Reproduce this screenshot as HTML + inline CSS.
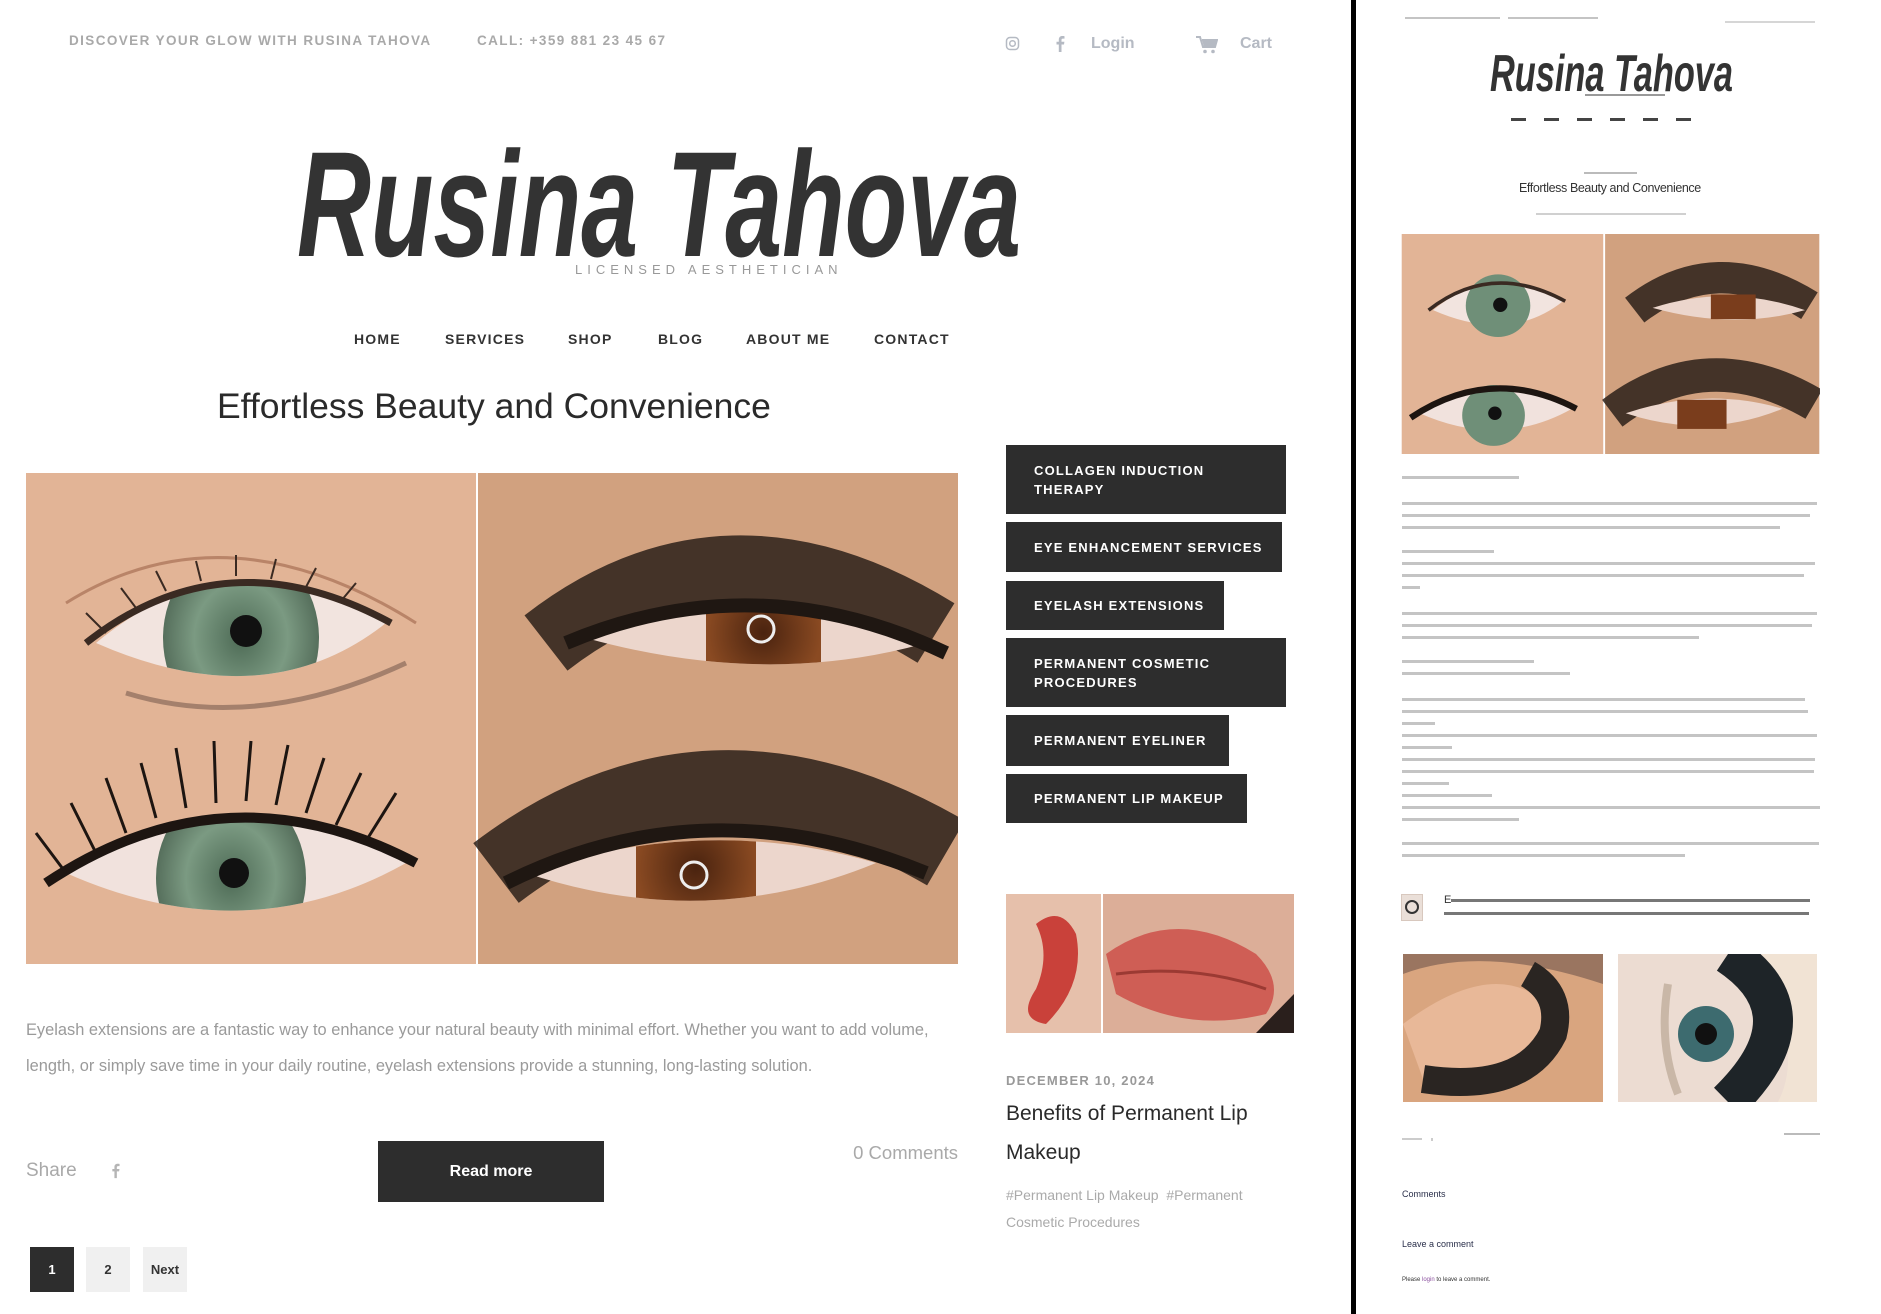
<!DOCTYPE html>
<html><head><meta charset="utf-8">
<style>
*{margin:0;padding:0;box-sizing:border-box}
html,body{width:1881px;height:1314px;overflow:hidden;background:#fff;font-family:"Liberation Sans",Arial,sans-serif;position:relative}
.a{position:absolute;white-space:nowrap}
.top{font-size:13.5px;font-weight:bold;color:#a9a9a9;letter-spacing:1.4px;top:33px}
.nav{top:331px;font-size:14px;font-weight:bold;color:#333;letter-spacing:1.2px}
.btn{position:absolute;left:1006px;background:#2d2d2d;color:#fff;font-size:13px;font-weight:bold;letter-spacing:1.2px;padding-left:28px;display:flex;align-items:center;line-height:19px;white-space:normal}
.ln{position:absolute;left:1402px;height:3px;background:#c4c4c4}
.pg{position:absolute;top:1247px;width:44px;height:45px;background:#f0f0f0;font-size:13px;font-weight:bold;color:#333;display:flex;align-items:center;justify-content:center}
</style></head><body>

<div class="a top" style="left:69px">DISCOVER YOUR GLOW WITH RUSINA TAHOVA</div>
<div class="a top" style="left:477px">CALL: +359 881 23 45 67</div>
<svg class="a" style="left:1005px;top:36px" width="15" height="15" viewBox="0 0 15 15"><rect x="1.5" y="1.5" width="12" height="12" rx="3.5" fill="none" stroke="#b5bac3" stroke-width="1.5"/><circle cx="7.5" cy="7.5" r="2.8" fill="none" stroke="#b5bac3" stroke-width="1.5"/></svg>
<svg class="a" style="left:1055px;top:35px" width="10" height="17" viewBox="0 0 10 17"><path d="M6.5 17V9.5H9L9.4 6.8H6.5V5c0-.8.3-1.4 1.4-1.4H9.5V1.2C9.2 1.1 8.3 1 7.3 1 5.2 1 3.8 2.3 3.8 4.6v2.2H1.5v2.7h2.3V17z" fill="#b5bac3"/></svg>
<div class="a" style="left:1091px;top:35px;font-size:16px;font-weight:bold;color:#b5bac3">Login</div>
<svg class="a" style="left:1196px;top:36px" width="22" height="18" viewBox="0 0 22 18"><path d="M0 1h4l3 10h12l2-7H6" fill="none" stroke="#b5bac3" stroke-width="2"/><path d="M6 4h15l-2 7H8z" fill="#b5bac3"/><circle cx="9" cy="15.5" r="1.8" fill="#b5bac3"/><circle cx="17" cy="15.5" r="1.8" fill="#b5bac3"/></svg>
<div class="a" style="left:1240px;top:35px;font-size:16px;font-weight:bold;color:#b5bac3">Cart</div>

<svg class="a" style="left:297px;top:118px" width="730" height="165" viewBox="0 0 730 165">
<text x="0" y="138" font-family="Liberation Sans Narrow, Liberation Sans, sans-serif" font-style="italic" font-weight="bold" font-size="150" fill="#333" textLength="724" lengthAdjust="spacingAndGlyphs">Rusina Tahova</text>
<rect x="270" y="140" width="250" height="20" fill="#fff"/>
<text x="278" y="156" font-family="Liberation Sans, sans-serif" font-size="13" fill="#999" letter-spacing="5">LICENSED AESTHETICIAN</text>
</svg>

<div class="a nav" style="left:354px">HOME</div>
<div class="a nav" style="left:445px">SERVICES</div>
<div class="a nav" style="left:568px">SHOP</div>
<div class="a nav" style="left:658px">BLOG</div>
<div class="a nav" style="left:746px">ABOUT ME</div>
<div class="a nav" style="left:874px">CONTACT</div>

<div class="a" style="left:217px;top:386px;font-size:35.5px;color:#2a2a2a">Effortless Beauty and Convenience</div>

<svg class="a" style="left:26px;top:473px" width="932" height="491" viewBox="0 0 932 491">
<defs>
<radialGradient id="gi" cx=".5" cy=".5" r=".5"><stop offset="0" stop-color="#4d6a55"/><stop offset=".6" stop-color="#7b9a82"/><stop offset="1" stop-color="#566f5c"/></radialGradient>
<radialGradient id="bi" cx=".5" cy=".5" r=".5"><stop offset="0" stop-color="#4a230f"/><stop offset="1" stop-color="#8a4a22"/></radialGradient>
<clipPath id="e1"><path d="M70 170 Q200 60 360 150 Q240 245 70 170z"/></clipPath>
<clipPath id="e2"><path d="M40 400 Q200 300 380 390 Q220 480 40 400z"/></clipPath>
<clipPath id="e3"><path d="M560 165 Q730 110 900 170 Q740 215 560 165z"/></clipPath>
<clipPath id="e4"><path d="M500 400 Q680 340 850 390 Q680 460 500 400z"/></clipPath>
</defs>
<rect width="450" height="491" fill="#e2b496"/>
<rect x="452" width="480" height="491" fill="#d1a17f"/>
<rect x="450" width="2" height="491" fill="#fff"/>
<path d="M40 130 Q200 30 390 150" fill="none" stroke="#b98468" stroke-width="3"/>
<path d="M70 170 Q200 60 360 150 Q240 245 70 170z" fill="#f2e4df"/>
<g clip-path="url(#e1)"><ellipse cx="215" cy="165" rx="78" ry="92" fill="url(#gi)"/><circle cx="220" cy="158" r="16" fill="#111"/></g>
<path d="M60 170 Q200 60 365 150" fill="none" stroke="#3a2a22" stroke-width="7"/>
<g stroke="#3a2a22" stroke-width="2" fill="none"><path d="M80 160 L60 140M110 135 L95 115M140 118 L130 98M175 108 L170 88M210 103 L210 82M245 106 L250 86M280 114 L290 95M315 128 L330 110"/></g>
<path d="M100 220 Q230 260 380 190" fill="none" stroke="#8a6a5a" stroke-width="5" opacity=".7"/>
<path d="M40 400 Q200 300 380 390 Q220 480 40 400z" fill="#f1e2dd"/>
<g clip-path="url(#e2)"><ellipse cx="205" cy="405" rx="75" ry="90" fill="url(#gi)"/><circle cx="208" cy="400" r="15" fill="#111"/></g>
<path d="M20 410 Q200 290 390 390" fill="none" stroke="#1d1511" stroke-width="10"/>
<g stroke="#1d1511" stroke-width="3" fill="none">
<path d="M40 400 L10 360M70 380 L45 330M100 360 L80 305M130 345 L115 290M160 335 L150 275M190 330 L188 268M220 328 L225 268M250 332 L262 272M280 340 L298 285M310 352 L335 300M340 368 L370 320"/></g>
<path d="M520 170 Q700 30 910 160" fill="none" stroke="#2b2019" stroke-width="70" opacity=".85"/>
<path d="M560 165 Q730 110 900 170 Q740 215 560 165z" fill="#ecd6cc"/>
<g clip-path="url(#e3)"><rect x="680" y="100" width="115" height="120" fill="url(#bi)"/><circle cx="735" cy="156" r="13" fill="none" stroke="#eee" stroke-width="3"/></g>
<path d="M540 170 Q730 90 920 180" fill="none" stroke="#1f1712" stroke-width="14"/>
<path d="M470 400 Q680 240 920 380" fill="none" stroke="#2b2019" stroke-width="75" opacity=".85"/>
<path d="M500 400 Q680 340 850 390 Q680 460 500 400z" fill="#ecd6cc"/>
<g clip-path="url(#e4)"><rect x="610" y="330" width="120" height="130" fill="url(#bi)"/><circle cx="668" cy="402" r="13" fill="none" stroke="#eee" stroke-width="3"/></g>
<path d="M480 410 Q680 310 900 400" fill="none" stroke="#1f1712" stroke-width="14"/>
</svg>

<div class="btn" style="top:445px;width:280px;height:69px">COLLAGEN INDUCTION<br>THERAPY</div>
<div class="btn" style="top:522px;width:276px;height:50px">EYE ENHANCEMENT SERVICES</div>
<div class="btn" style="top:581px;width:218px;height:49px">EYELASH EXTENSIONS</div>
<div class="btn" style="top:638px;width:280px;height:69px">PERMANENT COSMETIC<br>PROCEDURES</div>
<div class="btn" style="top:715px;width:223px;height:51px">PERMANENT EYELINER</div>
<div class="btn" style="top:774px;width:241px;height:49px">PERMANENT LIP MAKEUP</div>

<svg class="a" style="left:1006px;top:894px" width="288" height="139" viewBox="0 0 288 139">
<rect width="288" height="139" fill="#e6c0ab"/>
<rect x="96" width="192" height="139" fill="#dcae98"/>
<path d="M30 30 Q55 10 70 40 Q80 90 40 130 Q10 125 30 95 Q45 60 30 30z" fill="#c9413a"/>
<path d="M100 60 Q170 10 250 60 Q280 90 260 120 Q180 140 110 100z" fill="#cf5e55"/>
<path d="M110 80 Q190 70 260 95" stroke="#9b3a33" stroke-width="3" fill="none"/>
<path d="M250 139 L288 100 L288 139z" fill="#2a1f1c"/>
<rect x="95" width="2" height="139" fill="#fff"/>
</svg>

<div class="a" style="left:1006px;top:1073px;font-size:13px;font-weight:bold;color:#999;letter-spacing:1.2px">DECEMBER 10, 2024</div>
<div class="a" style="left:1006px;top:1102px;font-size:21px;color:#2a2a2a">Benefits of Permanent Lip</div>
<div class="a" style="left:1006px;top:1141px;font-size:21px;color:#2a2a2a">Makeup</div>
<div class="a" style="left:1006px;top:1187px;font-size:14px;color:#aaa">#Permanent Lip Makeup &nbsp;#Permanent</div>
<div class="a" style="left:1006px;top:1214px;font-size:14px;color:#aaa">Cosmetic Procedures</div>

<div class="a" style="left:26px;top:1021px;font-size:16.4px;color:#9a9a9a">Eyelash extensions are a fantastic way to enhance your natural beauty with minimal effort. Whether you want to add volume,</div>
<div class="a" style="left:26px;top:1057px;font-size:16.4px;color:#9a9a9a">length, or simply save time in your daily routine, eyelash extensions provide a stunning, long-lasting solution.</div>

<div class="a" style="left:26px;top:1160px;font-size:19px;color:#a9a9a9">Share</div>
<svg class="a" style="left:111px;top:1162px" width="9" height="17" viewBox="0 0 10 17"><path d="M6.5 17V9.5H9L9.4 6.8H6.5V5c0-.8.3-1.4 1.4-1.4H9.5V1.2C9.2 1.1 8.3 1 7.3 1 5.2 1 3.8 2.3 3.8 4.6v2.2H1.5v2.7h2.3V17z" fill="#b5b5b5"/></svg>
<div class="a" style="left:378px;top:1141px;width:226px;height:61px;background:#2d2d2d;color:#fff;font-size:16px;font-weight:bold;display:flex;align-items:center;justify-content:center">Read more</div>
<div class="a" style="left:841px;top:1142px;width:117px;text-align:right;font-size:18.5px;color:#a9a9a9">0 Comments</div>

<div class="pg" style="left:30px;background:#2d2d2d;color:#fff">1</div>
<div class="pg" style="left:86px">2</div>
<div class="pg" style="left:143px">Next</div>

<div class="a" style="left:1351px;top:0;width:5px;height:1314px;background:#000"></div>

<!-- mini page -->
<div class="a" style="left:1405px;top:17px;width:95px;height:2px;background:#c4c4c4"></div>
<div class="a" style="left:1508px;top:17px;width:90px;height:2px;background:#c4c4c4"></div>
<div class="a" style="left:1725px;top:21px;width:90px;height:2px;background:#d6d6d6"></div>
<svg class="a" style="left:1490px;top:43px" width="245" height="58" viewBox="0 0 245 58">
<text x="0" y="48" font-family="Liberation Sans Narrow, Liberation Sans, sans-serif" font-style="italic" font-weight="bold" font-size="52" fill="#333" textLength="243" lengthAdjust="spacingAndGlyphs">Rusina Tahova</text>
<rect x="95" y="51" width="80" height="2" fill="#999"/>
</svg>
<div class="a" style="left:1511px;top:118px;width:198px;height:3px;background:repeating-linear-gradient(90deg,#444 0 15px,#fff 15px 33px)"></div>
<div class="a" style="left:1584px;top:172px;width:53px;height:2px;background:#bbb"></div>
<div class="a" style="left:1519px;top:181px;font-size:12.5px;color:#333;letter-spacing:-0.4px">Effortless Beauty and Convenience</div>
<div class="a" style="left:1536px;top:213px;width:150px;height:2px;background:#d0d0d0"></div>

<svg class="a" style="left:1401px;top:234px" width="419" height="220" viewBox="0 0 932 491">
<rect width="450" height="491" fill="#e2b496"/>
<rect x="452" width="480" height="491" fill="#d1a17f"/>
<rect x="450" width="4" height="491" fill="#fff"/>
<path d="M70 170 Q200 60 360 150 Q240 245 70 170z" fill="#f2e4df"/>
<ellipse cx="215" cy="160" rx="72" ry="70" fill="#6f8f78"/><circle cx="220" cy="158" r="16" fill="#111"/>
<path d="M60 170 Q200 60 365 150" fill="none" stroke="#3a2a22" stroke-width="8"/>
<path d="M40 400 Q200 300 380 390 Q220 480 40 400z" fill="#f1e2dd"/>
<ellipse cx="205" cy="405" rx="70" ry="68" fill="#6f8f78"/><circle cx="208" cy="400" r="15" fill="#111"/>
<path d="M20 410 Q200 290 390 390" fill="none" stroke="#1d1511" stroke-width="14"/>
<path d="M520 170 Q700 30 910 160" fill="none" stroke="#2b2019" stroke-width="70" opacity=".85"/>
<path d="M560 165 Q730 110 900 170 Q740 215 560 165z" fill="#ecd6cc"/>
<rect x="690" y="135" width="100" height="55" fill="#7a3d1c"/>
<path d="M470 400 Q680 240 920 380" fill="none" stroke="#2b2019" stroke-width="75" opacity=".85"/>
<path d="M500 400 Q680 340 850 390 Q680 460 500 400z" fill="#ecd6cc"/>
<rect x="615" y="370" width="110" height="65" fill="#7a3d1c"/>
</svg>

<div class="ln" style="top:476px;width:117px"></div>
<div class="ln" style="top:502px;width:415px"></div>
<div class="ln" style="top:514px;width:408px"></div>
<div class="ln" style="top:526px;width:378px"></div>
<div class="ln" style="top:550px;width:92px"></div>
<div class="ln" style="top:562px;width:413px"></div>
<div class="ln" style="top:574px;width:402px"></div>
<div class="ln" style="top:586px;width:18px"></div>
<div class="ln" style="top:612px;width:415px"></div>
<div class="ln" style="top:624px;width:410px"></div>
<div class="ln" style="top:636px;width:297px"></div>
<div class="ln" style="top:660px;width:132px"></div>
<div class="ln" style="top:672px;width:168px"></div>
<div class="ln" style="top:698px;width:403px"></div>
<div class="ln" style="top:710px;width:406px"></div>
<div class="ln" style="top:722px;width:33px"></div>
<div class="ln" style="top:734px;width:415px"></div>
<div class="ln" style="top:746px;width:50px"></div>
<div class="ln" style="top:758px;width:413px"></div>
<div class="ln" style="top:770px;width:412px"></div>
<div class="ln" style="top:782px;width:47px"></div>
<div class="ln" style="top:794px;width:90px"></div>
<div class="ln" style="top:806px;width:418px"></div>
<div class="ln" style="top:818px;width:117px"></div>
<div class="ln" style="top:842px;width:417px"></div>
<div class="ln" style="top:854px;width:283px"></div>

<div class="a" style="left:1401px;top:894px;width:22px;height:27px;background:#eadfd8;border:1px solid #d8c8be"></div>
<div class="a" style="left:1405px;top:900px;width:14px;height:14px;border:2px solid #333;border-radius:50%"></div>
<div class="a" style="left:1444px;top:894px;font-size:11px;color:#333">E</div>
<div class="a" style="left:1451px;top:899px;width:359px;height:3px;background:#777"></div>
<div class="a" style="left:1444px;top:912px;width:365px;height:3px;background:#777"></div>

<svg class="a" style="left:1403px;top:954px" width="200" height="148" viewBox="0 0 200 148">
<rect width="200" height="148" fill="#d9a57f"/>
<path d="M0 20 Q80 -10 200 30 L200 0 L0 0z" fill="#9a7560"/>
<path d="M0 70 Q80 10 130 40 Q170 90 100 130 Q40 150 20 125" fill="#e8b898"/>
<path d="M20 125 Q120 140 150 80 Q160 40 125 20" fill="none" stroke="#2a2522" stroke-width="28"/>
</svg>
<svg class="a" style="left:1618px;top:954px" width="199" height="148" viewBox="0 0 199 148">
<rect width="199" height="148" fill="#ecdcd2"/>
<path d="M130 0 L199 0 L199 148 L160 148 Q190 90 130 0z" fill="#f1e3d4"/>
<path d="M110 0 Q200 60 110 148" fill="none" stroke="#1e2428" stroke-width="40"/>
<circle cx="88" cy="80" r="28" fill="#3d6b6f"/><circle cx="88" cy="80" r="11" fill="#111"/>
<path d="M50 30 Q40 90 60 140" fill="none" stroke="#c9b7a7" stroke-width="8"/>
</svg>

<div class="a" style="left:1402px;top:1138px;width:20px;height:2px;background:#ccc"></div>
<div class="a" style="left:1431px;top:1138px;width:2px;height:3px;background:#ccc"></div>
<div class="a" style="left:1784px;top:1133px;width:36px;height:2px;background:#bbb"></div>
<div class="a" style="left:1402px;top:1189px;font-size:9px;color:#2a2f4a">Comments</div>
<div class="a" style="left:1402px;top:1239px;font-size:9px;color:#2a2f4a">Leave a comment</div>
<div class="a" style="left:1402px;top:1277px;font-size:6px;color:#333">Please <span style="color:#8a4f9e">login</span> to leave a comment.</div>

</body></html>
